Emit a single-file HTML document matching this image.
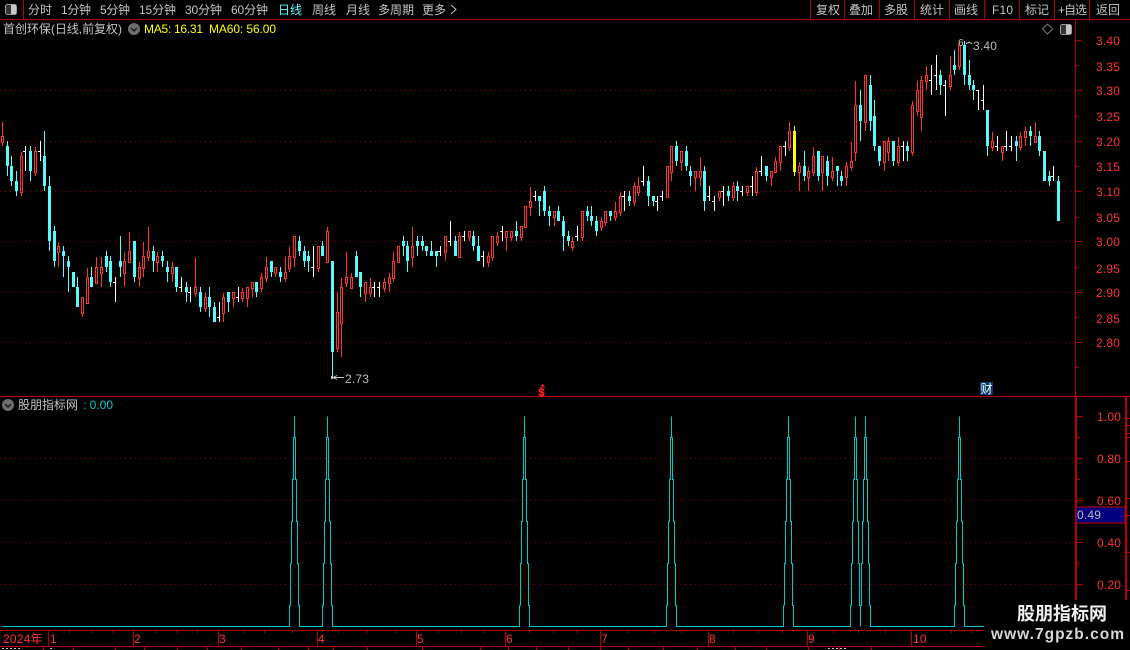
<!DOCTYPE html>
<html><head><meta charset="utf-8"><style>
html,body{margin:0;padding:0;background:#000;width:1130px;height:650px;overflow:hidden}
svg{display:block;position:absolute;left:0;top:0}
text{font-family:"Liberation Sans","Noto Sans CJK SC",sans-serif;font-size:12px}
.n{fill:#c4c4c4;letter-spacing:0}
.a{fill:#ff3232;font-size:12.5px;letter-spacing:.2px}
.y{fill:#ffff00;letter-spacing:0}
.g{fill:#bdbdbd;letter-spacing:.2px}
</style></head><body>
<svg id="s" width="1130" height="650" viewBox="0 0 1130 650" xmlns="http://www.w3.org/2000/svg">
<g shape-rendering="crispEdges" fill="none">
<g stroke="#a00000" stroke-dasharray="1 4">
<path d="M0 90.5H1075M0 141.500H1075M0 191.5H1075M0 241.5H1075M0 292.5H1075M0 342.5H1075"/>
<path d="M0 458.5H1075M0 500.5H1075M0 542.5H1075M0 584.5H1075"/>
</g>
<g stroke="#b00000">
<path d="M0 19.5H1130M23.5 0V19M810.5 0V19M844.5 0V19M879.5 0V19M914.5 0V19M949.5 0V19M984.5 0V19M1019.5 0V19M1054.5 0V19M1089.5 0V19"/>
<path d="M1075.5 19V396"/>
<path d="M1075 40.5h7M1075 65.5h4M1075 90.5h7M1075 116.5h4M1075 141.5h7M1075 166.5h4M1075 191.5h7M1075 217.5h4M1075 241.5h7M1075 267.5h4M1075 292.5h7M1075 317.5h4M1075 342.5h7M1075 367.5h4"/>
<path d="M1077 416.5h6M1077 437.5h3M1077 458.5h6M1077 479.5h3M1077 500.5h6M1077 542.5h6M1077 563.5h3M1077 584.5h6"/>
<path d="M1127 418.5h3M1127 425.5h3M1127 433.5h3M1127 437.5h3M1127 461.5h3M1127 498.5h3M1127 515.5h3M1127 552.5h3M1127 590.5h3"/>
</g>
<path d="M0 396.5H1130" stroke="#c00000"/>
<rect x="1075" y="396" width="2" height="204" fill="#c00000"/>
<rect x="1125" y="396" width="2" height="204" fill="#c00000"/>
<rect x="1076" y="507" width="49" height="16" fill="#00007f" stroke="#c00000"/>
<g stroke="#b80000">
<path d="M0 630.5H984M0 646.5H984"/>
<path d="M48.5 630V646M133.5 630V646M218.5 630V646M317.5 630V646M416.5 630V646M505.5 630V646M600.5 630V646M708.5 630V646M807.5 630V646M911.5 630V646"/>
<path d="M69.5 630v3M91.5 630v3M112.5 630v3M155.5 630v3M176.5 630v3M197.5 630v3M243.5 630v3M264.5 630v3M292.5 630v3M338.5 630v3M367.5 630v3M396.5 630v3M438.5 630v3M461.5 630v3M483.5 630v3M529.5 630v3M553.5 630v3M576.5 630v3M627.5 630v3M654.5 630v3M681.5 630v3M733.5 630v3M758.5 630v3M782.5 630v3M833.5 630v3M858.5 630v3M885.5 630v3M951.5 630v3M971.5 630v3"/>
<path d="M43.5 647v3M73.5 647v3M115.5 647v3M144.5 647v3M177.5 647v3M207.5 647v3M241.5 647v3M278.5 647v3M308.5 647v3M333.5 647v3M367.5 647v3M422.5 647v3M480.5 647v3M508.5 647v3M536.5 647v3M568.5 647v3M600.5 647v3M628.5 647v3M663.5 647v3M697.5 647v3M735.5 647v3M766.5 647v3M808.5 647v3M839.5 647v3M871.5 647v3"/>
</g>
<path d="M2 648.5h20M50 648.5h3M828 648.5h18" stroke="#c8c8c8" stroke-dasharray="2 2"/>
<path id="ind" stroke="#00c8c8" d="M2 626.5H289.5V605.5H290.5V563.5H291.5V521.5H292.5V479.5H293.5V437.5H294.5V416.5V437.5H295.5V479.5H296.5V521.5H297.5V563.5H298.5V605.5H299.5V626.5H322.5V605.5H323.5V563.5H324.5V521.5H325.5V479.5H326.5V437.5H327.5V416.5V437.5H328.5V479.5H329.5V521.5H330.5V563.5H331.5V605.5H332.5V626.5H519.5V605.5H520.5V563.5H521.5V521.5H522.5V479.5H523.5V437.5H524.5V416.5V437.5H525.5V479.5H526.5V521.5H527.5V563.5H528.5V605.5H529.5V626.5H666.5V605.5H667.5V563.5H668.5V521.5H669.5V479.5H670.5V437.5H671.5V416.5V437.5H672.5V479.5H673.5V521.5H674.5V563.5H675.5V605.5H676.5V626.5H783.5V605.5H784.5V563.5H785.5V521.5H786.5V479.5H787.5V437.5H788.5V416.5V437.5H789.5V479.5H790.5V521.5H791.5V563.5H792.5V605.5H793.5V626.5H850.5V605.5H851.5V563.5H852.5V521.5H853.5V479.5H854.5V437.5H855.5V416.5V437.5H856.5V479.5H857.5V521.5H858.5V563.5H859.5V605.5H860.5V626.5V605.5H861.5V563.5H862.5V521.5H863.5V479.5H864.5V437.5H865.5V416.5V437.5H866.5V479.5H867.5V521.5H868.5V563.5H869.5V605.5H870.5V626.5H954.5V605.5H955.5V563.5H956.5V521.5H957.5V479.5H958.5V437.5H959.5V416.5V437.5H960.5V479.5H961.5V521.5H962.5V563.5H963.5V605.5H964.5V626.5H984"/>
<g id="c"></g>
<path d="M333 377.5H344M333 377.5l4-2M333 377.5l4 2" stroke="#c8c8c8"/>
<path d="M966 43.5l3-1 3 1" stroke="#c8c8c8"/>
<rect x="331" y="376" width="2" height="3" fill="#c8c8c8"/>
<rect x="980" y="382" width="13" height="13" fill="#003a70"/>
</g>

<rect x="5.5" y="4.5" width="11" height="10" rx="2" fill="#333" stroke="#9a9a9a"/>
<rect x="11" y="5" width="5" height="9" fill="#c8c8c8"/>
<rect x="1060.5" y="24.5" width="11" height="10" rx="2" fill="#333" stroke="#9a9a9a"/>
<rect x="1066" y="25" width="5" height="9" fill="#c8c8c8"/>
<path d="M1047.5 24l5 5-5 5-5-5z" fill="none" stroke="#7a7a7a"/>

<g class="n">
<text x="28" y="14">分时</text>
<text x="61" y="14" textLength="30">1分钟</text>
<text x="100" y="14" textLength="30">5分钟</text>
<text x="139" y="14" textLength="37">15分钟</text>
<text x="185" y="14" textLength="37">30分钟</text>
<text x="231" y="14" textLength="37">60分钟</text>
<text x="278" y="14" style="fill:#54fcfc">日线</text>
<text x="312" y="14">周线</text>
<text x="346" y="14">月线</text>
<text x="378" y="14">多周期</text>
<text x="422" y="14">更多</text>
<text x="816" y="14">复权</text>
<text x="849" y="14">叠加</text>
<text x="884" y="14">多股</text>
<text x="920" y="14">统计</text>
<text x="954" y="14">画线</text>
<text x="992" y="14" textLength="21">F10</text>
<text x="1025" y="14">标记</text>
<text x="1058" y="14" textLength="29">+自选</text>
<text x="1096" y="14">返回</text>
<text x="3" y="33" textLength="119">首创环保(日线,前复权)</text>
<text x="18" y="409">股朋指标网</text>
</g>
<path d="M451 5l5 4.5-5 4.5" fill="none" stroke="#c4c4c4"/>

<circle cx="134" cy="29" r="6" fill="#6e6e6e"/>
<path d="M131 28l3 3 3-3" fill="none" stroke="#111" stroke-width="1.3"/>
<circle cx="8" cy="405" r="6" fill="#6e6e6e"/>
<path d="M5 404l3 3 3-3" fill="none" stroke="#111" stroke-width="1.3"/>

<text x="144" y="33" class="y" textLength="59">MA5: 16.31</text>
<text x="209" y="33" class="y" textLength="67">MA60: 56.00</text>
<text x="83" y="409" style="fill:#00c8c8" textLength="30">: 0.00</text>

<g class="a">
<text x="1096" y="45">3.40</text><text x="1096" y="71">3.35</text><text x="1096" y="95">3.30</text><text x="1096" y="121">3.25</text><text x="1096" y="146">3.20</text><text x="1096" y="171">3.15</text><text x="1096" y="196">3.10</text><text x="1096" y="222">3.05</text><text x="1096" y="246">3.00</text><text x="1096" y="273">2.95</text><text x="1096" y="297">2.90</text><text x="1096" y="323">2.85</text><text x="1096" y="347">2.80</text>
<text x="1097" y="421">1.00</text><text x="1097" y="463">0.80</text><text x="1097" y="505">0.60</text><text x="1097" y="547">0.40</text><text x="1097" y="589">0.20</text>
<text x="3" y="643">2024年</text>
<text x="50" y="643">1</text><text x="134" y="643">2</text><text x="219" y="643">3</text><text x="318" y="643">4</text><text x="417" y="643">5</text><text x="506" y="643">6</text><text x="601" y="643">7</text><text x="709" y="643">8</text><text x="808" y="643">9</text><text x="913" y="643">10</text>
</g>
<text x="1077" y="519" class="g">0.49</text>
<text x="345" y="383" class="g">2.73</text>
<text x="973" y="50" class="g">3.40</text>
<text x="958" y="46" style="fill:#bdbdbd;font-size:10px">6</text>
<text x="980.5" y="393" style="fill:#fff">财</text>
<text x="538.500" y="396" style="fill:#ff2020;font-size:11px;font-weight:bold;stroke:#ff2020;stroke-width:.4">$</text>
<path d="M540 387h5M541 385.500h3M542.500 384v1" fill="none" stroke="#ff2020"/>

<rect x="984" y="600" width="146" height="50" fill="#000"/>
<text x="1017" y="620" style="fill:#f0f0f0;font-size:18px;font-weight:bold" textLength="90">股朋指标网</text>
<text x="991" y="639" style="fill:#d8d8d8;font-size:15.500px;font-weight:bold" textLength="133">www.7gpzb.com</text>
</svg>
<script>
var D="r,122,136,142,146 c,141,146,166,176 c,156,166,181,186 c,171,181,191,196 r,152,156,192,196 w,146,151,151,171 c,146,151,171,181 r,147,151,172,176 w,141,151,151,161 c,131,156,186,191 c,176,186,241,251 c,226,231,261,267 r,242,246,252,267 c,246,251,256,277 c,256,261,267,292 c,272,272,287,287 c,277,287,307,307 r,297,297,313,317 r,268,277,303,303 c,267,277,287,287 r,257,267,283,283 r,257,267,273,287 c,251,256,267,272 c,256,261,282,287 w,277,282,282,302 c,236,261,267,277 r,252,261,273,287 r,232,251,262,262 c,241,241,277,282 r,262,267,278,287 r,242,256,268,277 r,227,251,257,261 c,246,251,261,272 r,252,256,262,272 c,251,256,261,267 c,261,267,272,282 r,262,267,273,282 c,267,267,287,292 w,277,287,287,292 c,282,287,292,302 w,287,292,292,302 r,257,287,293,297 c,287,292,307,312 r,293,297,308,312 c,287,297,307,317 c,302,307,322,322 w,302,317,317,322 r,293,297,313,322 c,292,292,302,312 r,292,292,298,307 w,287,297,297,302 r,288,292,298,302 r,287,287,298,307 r,282,282,288,297 c,282,282,292,297 r,273,277,288,292 r,257,267,278,282 c,261,261,272,277 r,267,267,273,277 c,267,272,277,282 r,257,272,278,282 r,247,256,268,272 r,236,236,257,267 c,236,241,251,256 c,246,251,261,267 c,251,256,261,272 w,246,267,267,277 r,246,246,268,272 c,241,246,256,256 r,227,231,262,262 c,261,261,352,377 r,292,312,348,352 r,278,287,323,357 r,252,277,283,287 r,273,277,288,288 c,251,256,277,277 c,272,272,287,297 r,282,282,293,302 r,278,287,293,297 w,282,287,287,297 w,282,287,287,297 r,278,282,288,292 r,273,277,283,292 r,252,261,278,282 r,246,246,262,262 c,236,241,246,256 c,241,246,261,272 r,227,246,257,267 c,236,241,246,256 c,236,241,246,251 c,246,246,251,256 c,241,251,256,256 c,251,251,256,267 w,246,251,251,256 r,236,236,252,261 w,221,241,241,246 c,236,241,256,256 r,232,236,257,257 w,231,236,236,241 r,231,231,237,241 c,231,236,246,251 c,236,246,261,261 w,251,256,256,267 r,252,256,262,267 r,236,236,257,261 r,232,236,242,246 w,226,231,231,241 r,231,231,237,251 r,231,231,237,241 c,221,231,236,241 r,226,226,237,241 r,206,206,227,227 r,187,201,207,216 w,191,196,196,201 c,196,196,201,216 c,186,191,211,216 c,206,211,216,226 r,211,211,217,226 c,206,211,221,221 c,216,221,236,251 c,231,236,241,246 r,237,241,247,251 w,226,236,236,241 r,211,211,237,241 c,206,211,216,221 c,206,216,221,226 c,216,221,231,236 r,217,221,227,231 r,211,211,222,226 c,211,211,216,221 r,202,211,217,221 r,192,196,212,216 w,191,196,196,211 c,191,196,201,206 r,182,186,202,206 r,177,186,192,196 w,166,181,181,186 c,176,181,196,206 c,196,196,201,206 w,196,201,201,211 w,191,196,196,201 r,166,166,197,197 r,146,146,172,181 c,141,146,161,166 r,151,151,162,171 c,146,151,166,171 c,166,171,176,186 r,171,171,177,191 r,157,171,177,186 c,166,171,201,211 w,186,196,196,201 w,196,201,201,211 r,191,191,197,201 w,186,191,191,206 c,186,191,196,201 r,182,186,197,201 c,181,186,191,201 w,186,191,191,196 r,186,186,192,196 w,176,186,186,196 r,167,171,192,196 w,156,171,171,176 c,166,166,176,181 r,171,171,177,186 r,157,161,172,172 r,146,146,162,171 w,141,146,146,156 r,122,131,147,151 y,126,131,172,176 r,162,166,172,191 c,151,166,176,181 r,167,171,177,191 r,147,156,172,176 c,151,151,176,181 r,156,156,172,191 c,156,161,176,186 r,157,171,177,181 c,166,166,171,186 c,171,176,181,186 r,162,166,177,186 r,142,161,167,171 r,81,105,152,161 c,90,105,121,141 r,75,75,122,131 c,75,85,121,131 c,100,116,146,151 c,146,146,161,166 r,141,141,162,171 r,137,141,152,161 c,141,141,161,166 r,137,146,162,166 w,141,146,146,161 c,141,146,151,161 r,101,105,152,156 r,81,90,111,116 r,76,80,117,131 r,66,75,81,90 w,65,80,80,95 w,55,75,75,90 c,70,75,85,95 w,80,85,85,116 r,56,75,86,90 c,50,65,70,75 r,41,45,66,70 c,41,45,75,85 c,60,75,85,90 c,80,85,90,100 w,90,90,90,110 w,85,100,100,110 c,110,110,146,156 r,132,141,147,151 w,136,146,146,151 r,146,146,152,161 w,131,146,146,151 w,136,146,146,151 c,136,141,146,161 r,132,136,147,151 r,127,131,137,146 c,126,131,136,146 r,122,136,142,142 c,131,136,151,156 c,151,151,181,181 c,171,176,181,186 w,166,176,176,181 c,176,181,221,221".split(" ");
var col={r:"#ff3232",c:"#54fcfc",w:"#ffffff",y:"#ffff00"},o="";
for(var i=0;i<D.length;i++){
var p=D[i].split(","),t=p[0],h=+p[1],a=+p[2],b=+p[3],l=+p[4],x=Math.floor(1.8+i*4.716+.5),f=col[t];
if(t=="w"){o+='<rect x="'+x+'" y="'+h+'" width="1" height="'+(l-h)+'" fill="'+f+'"/><rect x="'+(x-2)+'" y="'+a+'" width="2" height="1" fill="'+f+'"/>';continue;}
o+='<rect x="'+x+'" y="'+h+'" width="1" height="'+(l-h)+'" fill="'+f+'"/>';
if(t=="r"){o+='<rect x="'+(x-1)+'.5" y="'+a+'.5" width="2" height="'+(b-a)+'" fill="#000" stroke="'+f+'"/>';}
else{o+='<rect x="'+(x-1)+'" y="'+a+'" width="3" height="'+(b-a)+'" fill="'+f+'"/>';}
}
document.getElementById("c").innerHTML=o;
</script>
</body></html>
